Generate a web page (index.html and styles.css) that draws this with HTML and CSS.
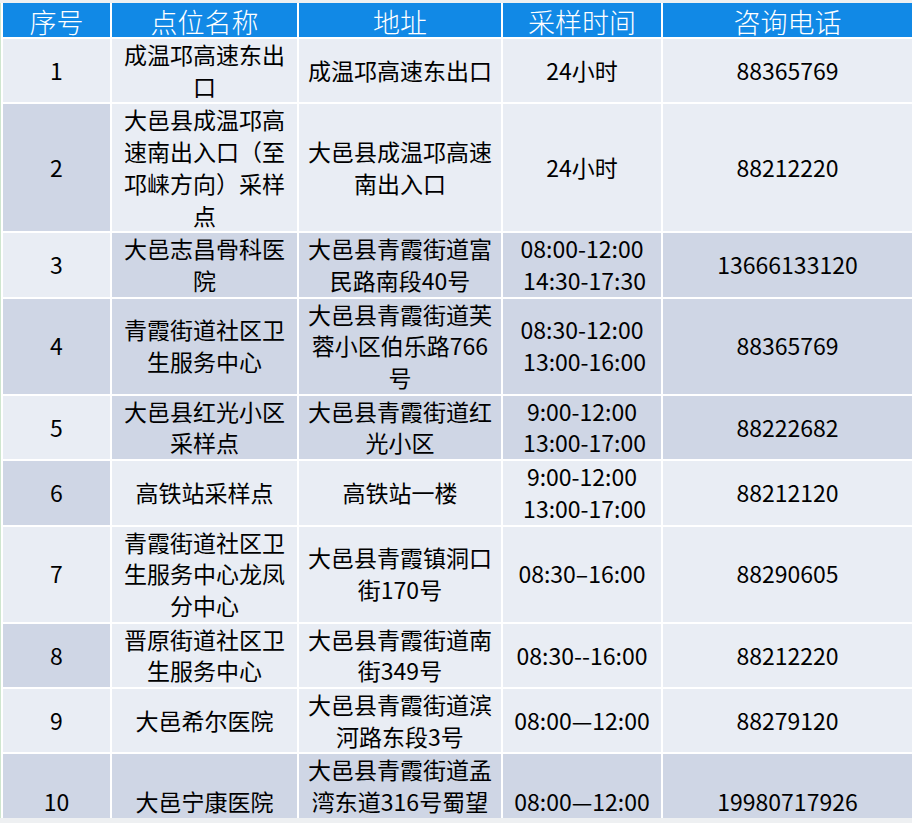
FILE: index.html
```html
<!DOCTYPE html>
<html lang="zh-CN">
<head>
<meta charset="utf-8">
<title>采样点位</title>
<link rel="stylesheet" href="styles.css">
</head>
<body>
<div class="frame">
  <div class="sheet">
    <div class="hd">序号</div><div class="hd">点位名称</div><div class="hd">地址</div><div class="hd">采样时间</div><div class="hd">咨询电话</div>

    <div class="c l">1</div><div class="c l">成温邛高速东出口</div><div class="c l">成温邛高速东出口</div><div class="c l">24小时</div><div class="c l">88365769</div>

    <div class="c d">2</div><div class="c l">大邑县成温邛高速南出入口（至邛崃方向）采样点</div><div class="c l">大邑县成温邛高速南出入口</div><div class="c l">24小时</div><div class="c l">88212220</div>

    <div class="c l">3</div><div class="c d">大邑志昌骨科医院</div><div class="c d">大邑县青霞街道富民路南段40号</div><div class="c d t">08:00-12:00<br> 14:30-17:30</div><div class="c d">13666133120</div>

    <div class="c d">4</div><div class="c d">青霞街道社区卫生服务中心</div><div class="c d">大邑县青霞街道芙蓉小区伯乐路766号</div><div class="c d t">08:30-12:00<br> 13:00-16:00</div><div class="c d">88365769</div>

    <div class="c l">5</div><div class="c d">大邑县红光小区采样点</div><div class="c d">大邑县青霞街道红光小区</div><div class="c d t">9:00-12:00<br> 13:00-17:00</div><div class="c d">88222682</div>

    <div class="c d">6</div><div class="c l">高铁站采样点</div><div class="c l">高铁站一楼</div><div class="c l t">9:00-12:00<br> 13:00-17:00</div><div class="c l">88212120</div>

    <div class="c l">7</div><div class="c l">青霞街道社区卫生服务中心龙凤分中心</div><div class="c l">大邑县青霞镇洞口街170号</div><div class="c l">08:30–16:00</div><div class="c l">88290605</div>

    <div class="c d">8</div><div class="c l">晋原街道社区卫生服务中心</div><div class="c l">大邑县青霞街道南街349号</div><div class="c l">08:30--16:00</div><div class="c l">88212220</div>

    <div class="c l">9</div><div class="c l">大邑希尔医院</div><div class="c l">大邑县青霞街道滨河路东段3号</div><div class="c l">08:00—12:00</div><div class="c l">88279120</div>

    <div class="c d">10</div><div class="c d">大邑宁康医院</div><div class="c d">大邑县青霞街道孟湾东道316号蜀望城小区</div><div class="c d">08:00—12:00</div><div class="c d">19980717926</div>
  </div>
</div>
</body>
</html>
```
FILE: styles.css
```css
html, body {
  margin: 0;
  padding: 0;
}
body {
  background: #eef0f2;
  font-family: "Noto Sans CJK SC", "Noto Sans", sans-serif;
  color: #000;
}
.frame {
  margin-top: 3px;
  height: 815px;
  overflow: hidden;
  border-left: 1px solid #cfe6cf;
  padding-left: 2px;
  background: #fff;
}
.sheet {
  display: grid;
  grid-template-columns: 107px 185px 202px 158px 249px;
  gap: 2px;
  background: #fff;
}
.hd {
  box-sizing: border-box;
  background: #1189e6;
  color: #fff;
  font-size: 27px;
  font-weight: 300;
  height: 34px;
  padding-top: 4px;
  line-height: 30px;
  text-align: center;
}
.c {
  display: flex;
  align-items: center;
  justify-content: center;
  text-align: center;
  font-size: 23px;
  line-height: 31.7px;
  padding: 0 8px;
  white-space: pre-wrap;
}
.t {
  white-space: pre;
}
.l {
  background: #e9edf4;
}
.d {
  background: #cfd6e5;
}
```
